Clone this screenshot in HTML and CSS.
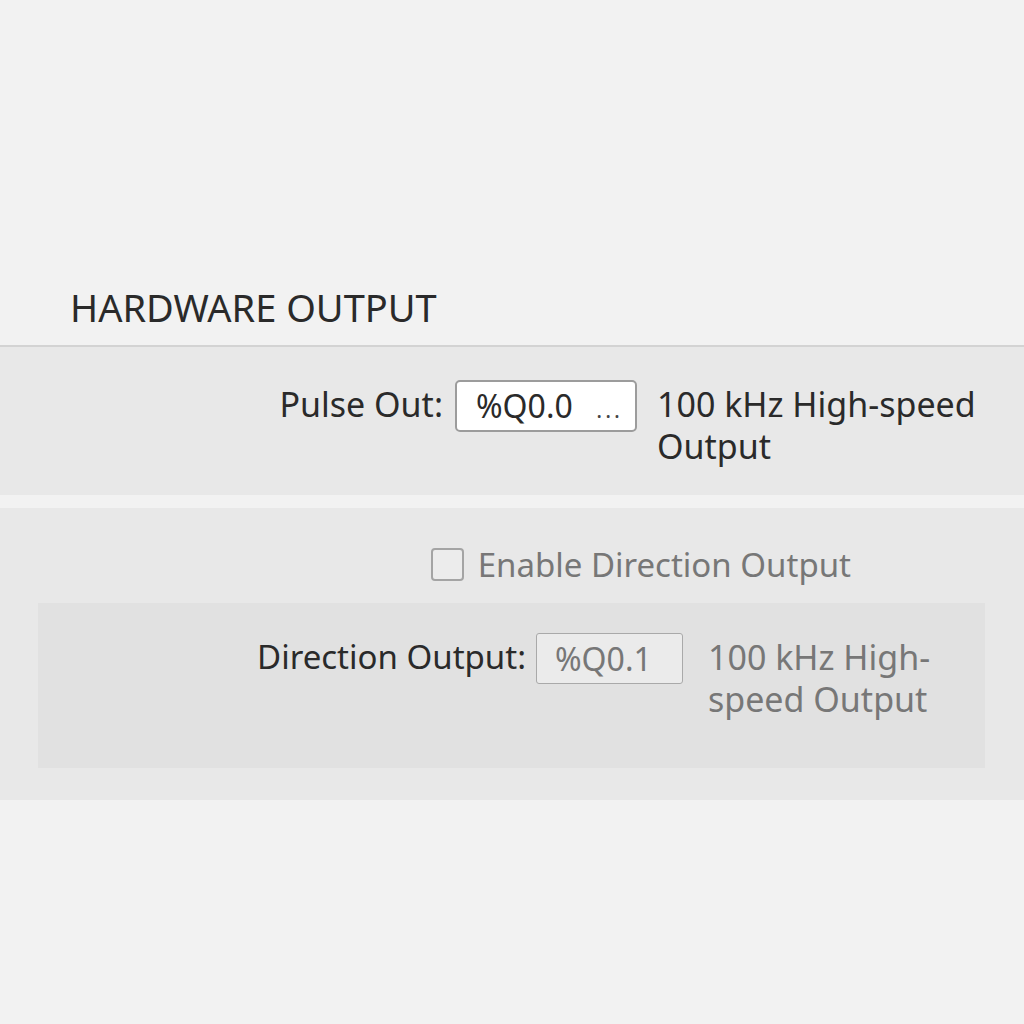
FILE: index.html
```html
<!DOCTYPE html>
<html lang="en">
<head>
    <meta charset="UTF-8">
    <meta name="viewport" content="width=device-width, initial-scale=1.0">
    <title>Hardware Output</title>
    <link rel="stylesheet" href="styles.css">
</head>
<body>
    <div class="section-header">
        <h2>HARDWARE OUTPUT</h2>
    </div>

    <!-- Pulse output channel -->
    <div class="band band-pulse">
        <div class="field-row">
            <label class="field-label" for="pulseOut">Pulse Out:</label>
            <div class="address-box" id="pulseOut">
                <span class="address-value">%Q0.0</span>
                <span class="address-more">...</span>
            </div>
            <div class="field-note note-pulse">100 kHz High-speed Output</div>
        </div>
    </div>

    <!-- Direction output (disabled until checked) -->
    <div class="band band-direction">
        <div class="check-row">
            <span class="checkbox"></span>
            <span class="check-label">Enable Direction Output</span>
        </div>
        <div class="sub-panel">
            <div class="field-row">
                <label class="field-label label-direction" for="dirOut">Direction Output:</label>
                <div class="address-box disabled" id="dirOut">
                    <span class="address-value">%Q0.1</span>
                </div>
                <div class="field-note note-direction disabled-text">100 kHz High-speed Output</div>
            </div>
        </div>
    </div>
</body>
</html>
```

FILE: styles.css
```css
body {
    margin: 0;
    background-color: #f2f2f2;
    font-family: 'Noto Sans', 'Open Sans', sans-serif;
    color: #2a2a2a;
}

.section-header {
    height: 347px;
    display: flex;
    align-items: flex-end;
    padding-left: 70px;
    box-sizing: border-box;
    border-bottom: 2px solid #d3d3d3;
}

.section-header h2 {
    margin: 0 0 16px 0;
    font-size: 38px;
    font-weight: normal;
    line-height: 44px;
    color: #2a2a2a;
}

.band {
    background-color: #e8e8e8;
}

.band-pulse {
    padding: 33px 47px 28px 0;
    margin-bottom: 13px;
}

.band-direction {
    padding: 35px 39px 32px 38px;
}

.field-row {
    display: flex;
    justify-content: flex-end;
    align-items: flex-start;
    font-size: 34px;
    line-height: 42px;
}

.field-label {
    margin-top: 3px;
    margin-right: 12px;
    white-space: nowrap;
}

.label-direction {
    font-size: 33px;
    margin-right: 10px;
}

.address-box {
    display: flex;
    align-items: center;
    justify-content: space-between;
    box-sizing: border-box;
    width: 182px;
    height: 52px;
    padding: 0 12px 0 19px;
    background-color: #fff;
    border: 2px solid #9c9c9c;
    border-radius: 5px;
}

.address-value {
    font-size: 32px;
}

.address-more {
    font-size: 22px;
    letter-spacing: 3px;
    color: #444;
    margin-top: 6px;
}

.field-note {
    margin-left: 20px;
    margin-top: 3px;
}

.note-pulse {
    width: 320px;
}

.check-row {
    display: flex;
    align-items: center;
    justify-content: flex-end;
    padding-right: 134px;
    height: 42px;
    margin-bottom: 18px;
}

.checkbox {
    width: 29px;
    height: 29px;
    border: 2px solid #a4a4a4;
    border-radius: 4px;
    background-color: #ececec;
    margin-right: 14px;
}

.check-label {
    font-size: 33px;
    color: #777;
}

.sub-panel {
    background-color: #e1e1e1;
    padding: 30px 54px 48px 0;
}

.address-box.disabled {
    width: 147px;
    height: 51px;
    padding-left: 18px;
    background-color: #ebebeb;
    border: 1px solid #a9a9a9;
    border-radius: 3px;
    color: #777;
}

.disabled-text {
    color: #777;
}

.note-direction {
    width: 223px;
    margin-left: 25px;
}
```
